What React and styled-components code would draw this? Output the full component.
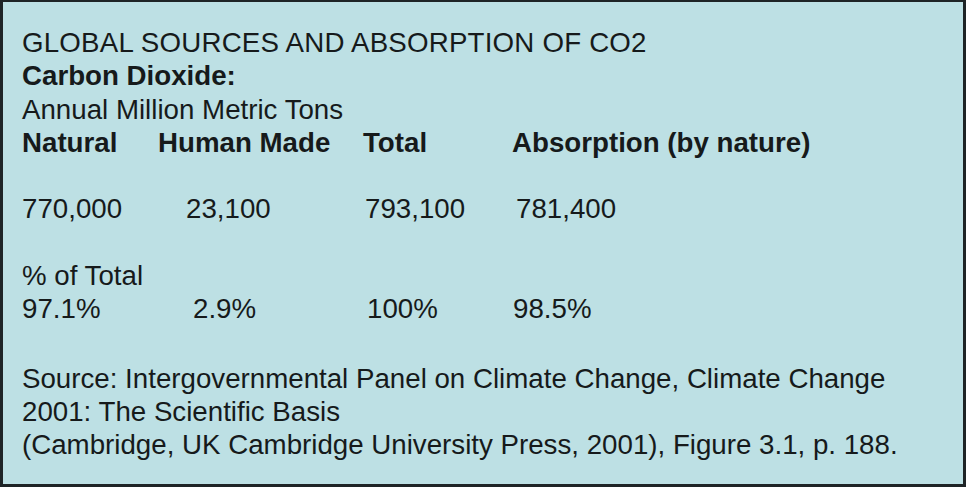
import React from "react";
import styled, { createGlobalStyle } from "styled-components";

const columns = ["Natural", "Human Made", "Total", "Absorption (by nature)"];

const amounts = [
  { value: "770,000", indent: 0 },
  { value: "23,100", indent: 28 },
  { value: "793,100", indent: 2 },
  { value: "781,400", indent: 4 },
];

const shares = [
  { value: "97.1%", indent: 0 },
  { value: "2.9%", indent: 35 },
  { value: "100%", indent: 4 },
  { value: "98.5%", indent: 1 },
];

export default function App() {
  return (
    <>
      <GlobalStyle />
      <Slide>
        <Title>GLOBAL SOURCES AND ABSORPTION OF CO2</Title>
        <Line bold>Carbon Dioxide:</Line>
        <Line>Annual Million Metric Tons</Line>

        <Row>
          {columns.map((c) => (
            <Cell key={c} bold>{c}</Cell>
          ))}
        </Row>

        <Row gap>
          {amounts.map((a) => (
            <Cell key={a.value} indent={a.indent}>{a.value}</Cell>
          ))}
        </Row>

        <Line gap>% of Total</Line>
        <Row>
          {shares.map((s) => (
            <Cell key={s.value} indent={s.indent}>{s.value}</Cell>
          ))}
        </Row>

        <Source>
          <Line>Source: Intergovernmental Panel on Climate Change, Climate Change</Line>
          <Line>2001: The Scientific Basis</Line>
          <Line>(Cambridge, UK Cambridge University Press, 2001), Figure 3.1, p. 188.</Line>
        </Source>
      </Slide>
    </>
  );
}

const GlobalStyle = createGlobalStyle`
  html, body {
    margin: 0;
    padding: 0;
    background: #bde0e4;
  }
`;

const Slide = styled.div`
  box-sizing: border-box;
  width: 966px;
  height: 487px;
  background: #bde0e4;
  border: 3px solid #1e2426;
  border-top-width: 2px;
  padding: 24px 0 0 19px;
  font-family: "Liberation Sans", Arial, sans-serif;
  font-size: 27.7px;
  line-height: 33.3px;
  color: #161a1b;
  overflow: hidden;
`;

const Line = styled.div`
  white-space: nowrap;
  font-weight: ${(p) => (p.bold ? 700 : 400)};
  margin-top: ${(p) => (p.gap ? "33.3px" : "0")};
`;

const Title = styled(Line)`
  letter-spacing: 0.2px;
`;

const Row = styled.div`
  display: grid;
  grid-template-columns: 136px 205px 149px auto;
  margin-top: ${(p) => (p.gap ? "33.3px" : "0")};
`;

const Cell = styled.div`
  white-space: nowrap;
  font-weight: ${(p) => (p.bold ? 700 : 400)};
  padding-left: ${(p) => p.indent || 0}px;
`;

const Source = styled.div`
  margin-top: 36px;
`;
